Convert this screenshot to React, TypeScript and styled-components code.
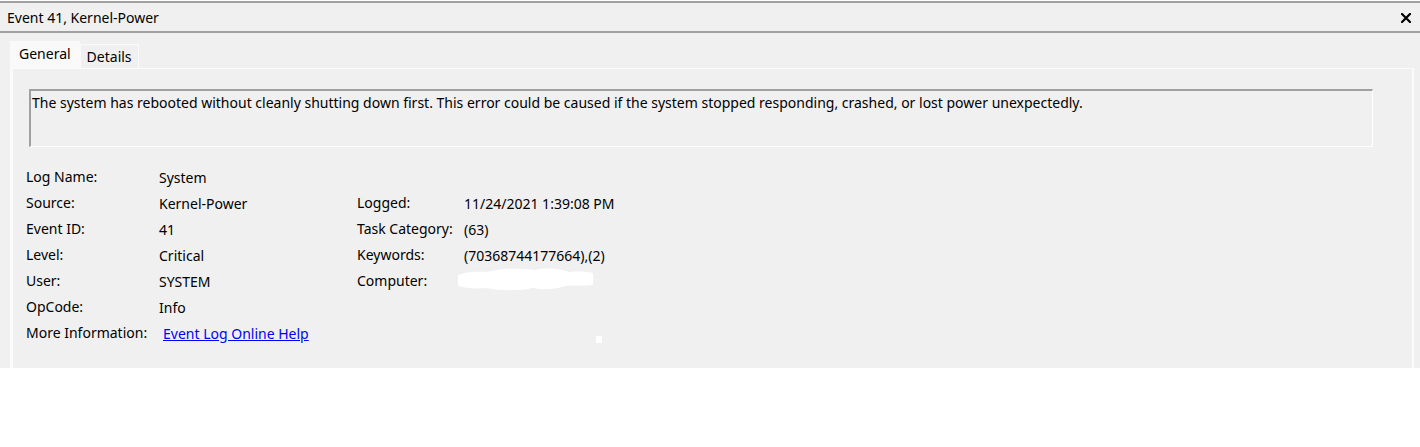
import { createGlobalStyle, styled } from "styled-components"

const Global = createGlobalStyle`
html, body {
  margin: 0;
  background: #ffffff;
}
body {
  font-family: "Noto Sans", "Open Sans", "DejaVu Sans", sans-serif;
  font-size: 14px;
  color: #000;
}
`

const general = [
  ["Log Name:", "System"],
  ["Source:", "Kernel-Power"],
  ["Event ID:", "41"],
  ["Level:", "Critical"],
  ["User:", "SYSTEM"],
  ["OpCode:", "Info"],
]

const extra = [
  ["Logged:", "11/24/2021 1:39:08 PM"],
  ["Task Category:", "(63)"],
  ["Keywords:", "(70368744177664),(2)"],
  ["Computer:", ""],
]

const App = () => {
  return (
    <Window>
      <Global />
      <TitleBar>
        <Title>Event 41, Kernel-Power</Title>
        <Close>
          <svg width="10" height="10" viewBox="0 0 10 10">
            <path d="M1 1 L9 9 M9 1 L1 9" stroke="#000" strokeWidth="2.2" strokeLinecap="square" />
          </svg>
        </Close>
      </TitleBar>
      <Body>
        <Tabs>
          <Tab $active>General</Tab>
          <Tab>Details</Tab>
        </Tabs>
        <Panel>
          <Description>
            The system has rebooted without cleanly shutting down first. This error could be caused if the system stopped responding, crashed, or lost power unexpectedly.
          </Description>
          <Fields>
            {general.map(([label, value], i) => {
              const right = i > 0 ? extra[i - 1] : undefined
              return (
                <Row key={label}>
                  <Label>{label}</Label>
                  <Value>{value}</Value>
                  <Label>{right ? right[0] : ""}</Label>
                  <Value>
                    {right && right[0] === "Computer:" ? (
                      <Blot>
                        <svg width="140" height="24" viewBox="0 0 140 24">
                          <path
                            d="M1 8 C8 5 20 4 30 5 C45 1 62 1 78 3 C92 0 104 2 112 5 C124 4 132 5 136 6 L136 18 C126 19 116 18 108 19 C96 23 86 23 76 21 C60 24 44 24 30 21 C18 22 8 21 1 19 Z"
                            fill="#ffffff"
                          />
                        </svg>
                      </Blot>
                    ) : right ? right[1] : ""}
                  </Value>
                </Row>
              )
            })}
            <Row>
              <Label>More Information:</Label>
              <Value>
                <HelpLink href="#">Event Log Online Help</HelpLink>
              </Value>
              <Label></Label>
              <Value>
                <Speck />
              </Value>
            </Row>
          </Fields>
        </Panel>
      </Body>
    </Window>
  )
}

export default App

const Window = styled.div`
width: 1420px;
height: 368px;
box-sizing: border-box;
border-top: 1px solid #ffffff;
background-color: #f0f0f0;
display: flex;
flex-direction: column;
`

const TitleBar = styled.div`
height: 28px;
border-top: 2px solid #a0a0a0;
border-bottom: 2px solid #a0a0a0;
display: flex;
align-items: center;
justify-content: space-between;
padding: 0 9px 0 7px;
`

const Title = styled.div`
font-size: 14px;
`

const Close = styled.div`
display: flex;
align-items: center;
padding-top: 2px;
`

const Body = styled.div`
flex: 1;
display: flex;
flex-direction: column;
padding: 8px 6px 0 10px;
`

const Tabs = styled.div`
display: flex;
align-items: flex-end;
height: 27px;
`

const Tab = styled.div<{ $active?: boolean }>`
box-sizing: border-box;
height: ${(p) => (p.$active ? "27px" : "24px")};
padding: ${(p) => (p.$active ? "3px 8px 0 8px" : "3px 6px 0 6px")};
background-color: ${(p) => (p.$active ? "#f9f9f9" : "#f0f0f0")};
border: 1px solid #fafafa;
border-bottom: none;
line-height: 17px;
`

const Panel = styled.div`
flex: 1;
box-sizing: border-box;
border: 1px solid #fbfbfb;
border-left-width: 3px;
border-right-width: 2px;
border-bottom: none;
padding: 20px 39px 0 13px;
`

const Description = styled.div`
height: 58px;
box-sizing: border-box;
margin-left: 3px;
border-top: 2px solid #a0a0a0;
border-left: 2px solid #a0a0a0;
border-right: 1px solid #ffffff;
border-bottom: 1px solid #ffffff;
padding: 3px 0 0 1px;
line-height: 17px;
`

const Fields = styled.div`
display: flex;
flex-direction: column;
padding-top: 21px;
`

const Row = styled.div`
display: grid;
grid-template-columns: 133px 198px 107px 1fr;
height: 26px;
align-items: start;
line-height: 17px;
`

const Label = styled.div`
white-space: nowrap;
`

const Value = styled.div`
padding-top: 1px;
white-space: nowrap;
`

const HelpLink = styled.a`
color: #0000ff;
text-decoration: underline;
margin-left: 4px;
`

const Blot = styled.div`
margin: -6px 0 0 -7px;
height: 17px;
`

const Speck = styled.div`
width: 6px;
height: 7px;
background: #ffffff;
margin: 11px 0 0 132px;
`
